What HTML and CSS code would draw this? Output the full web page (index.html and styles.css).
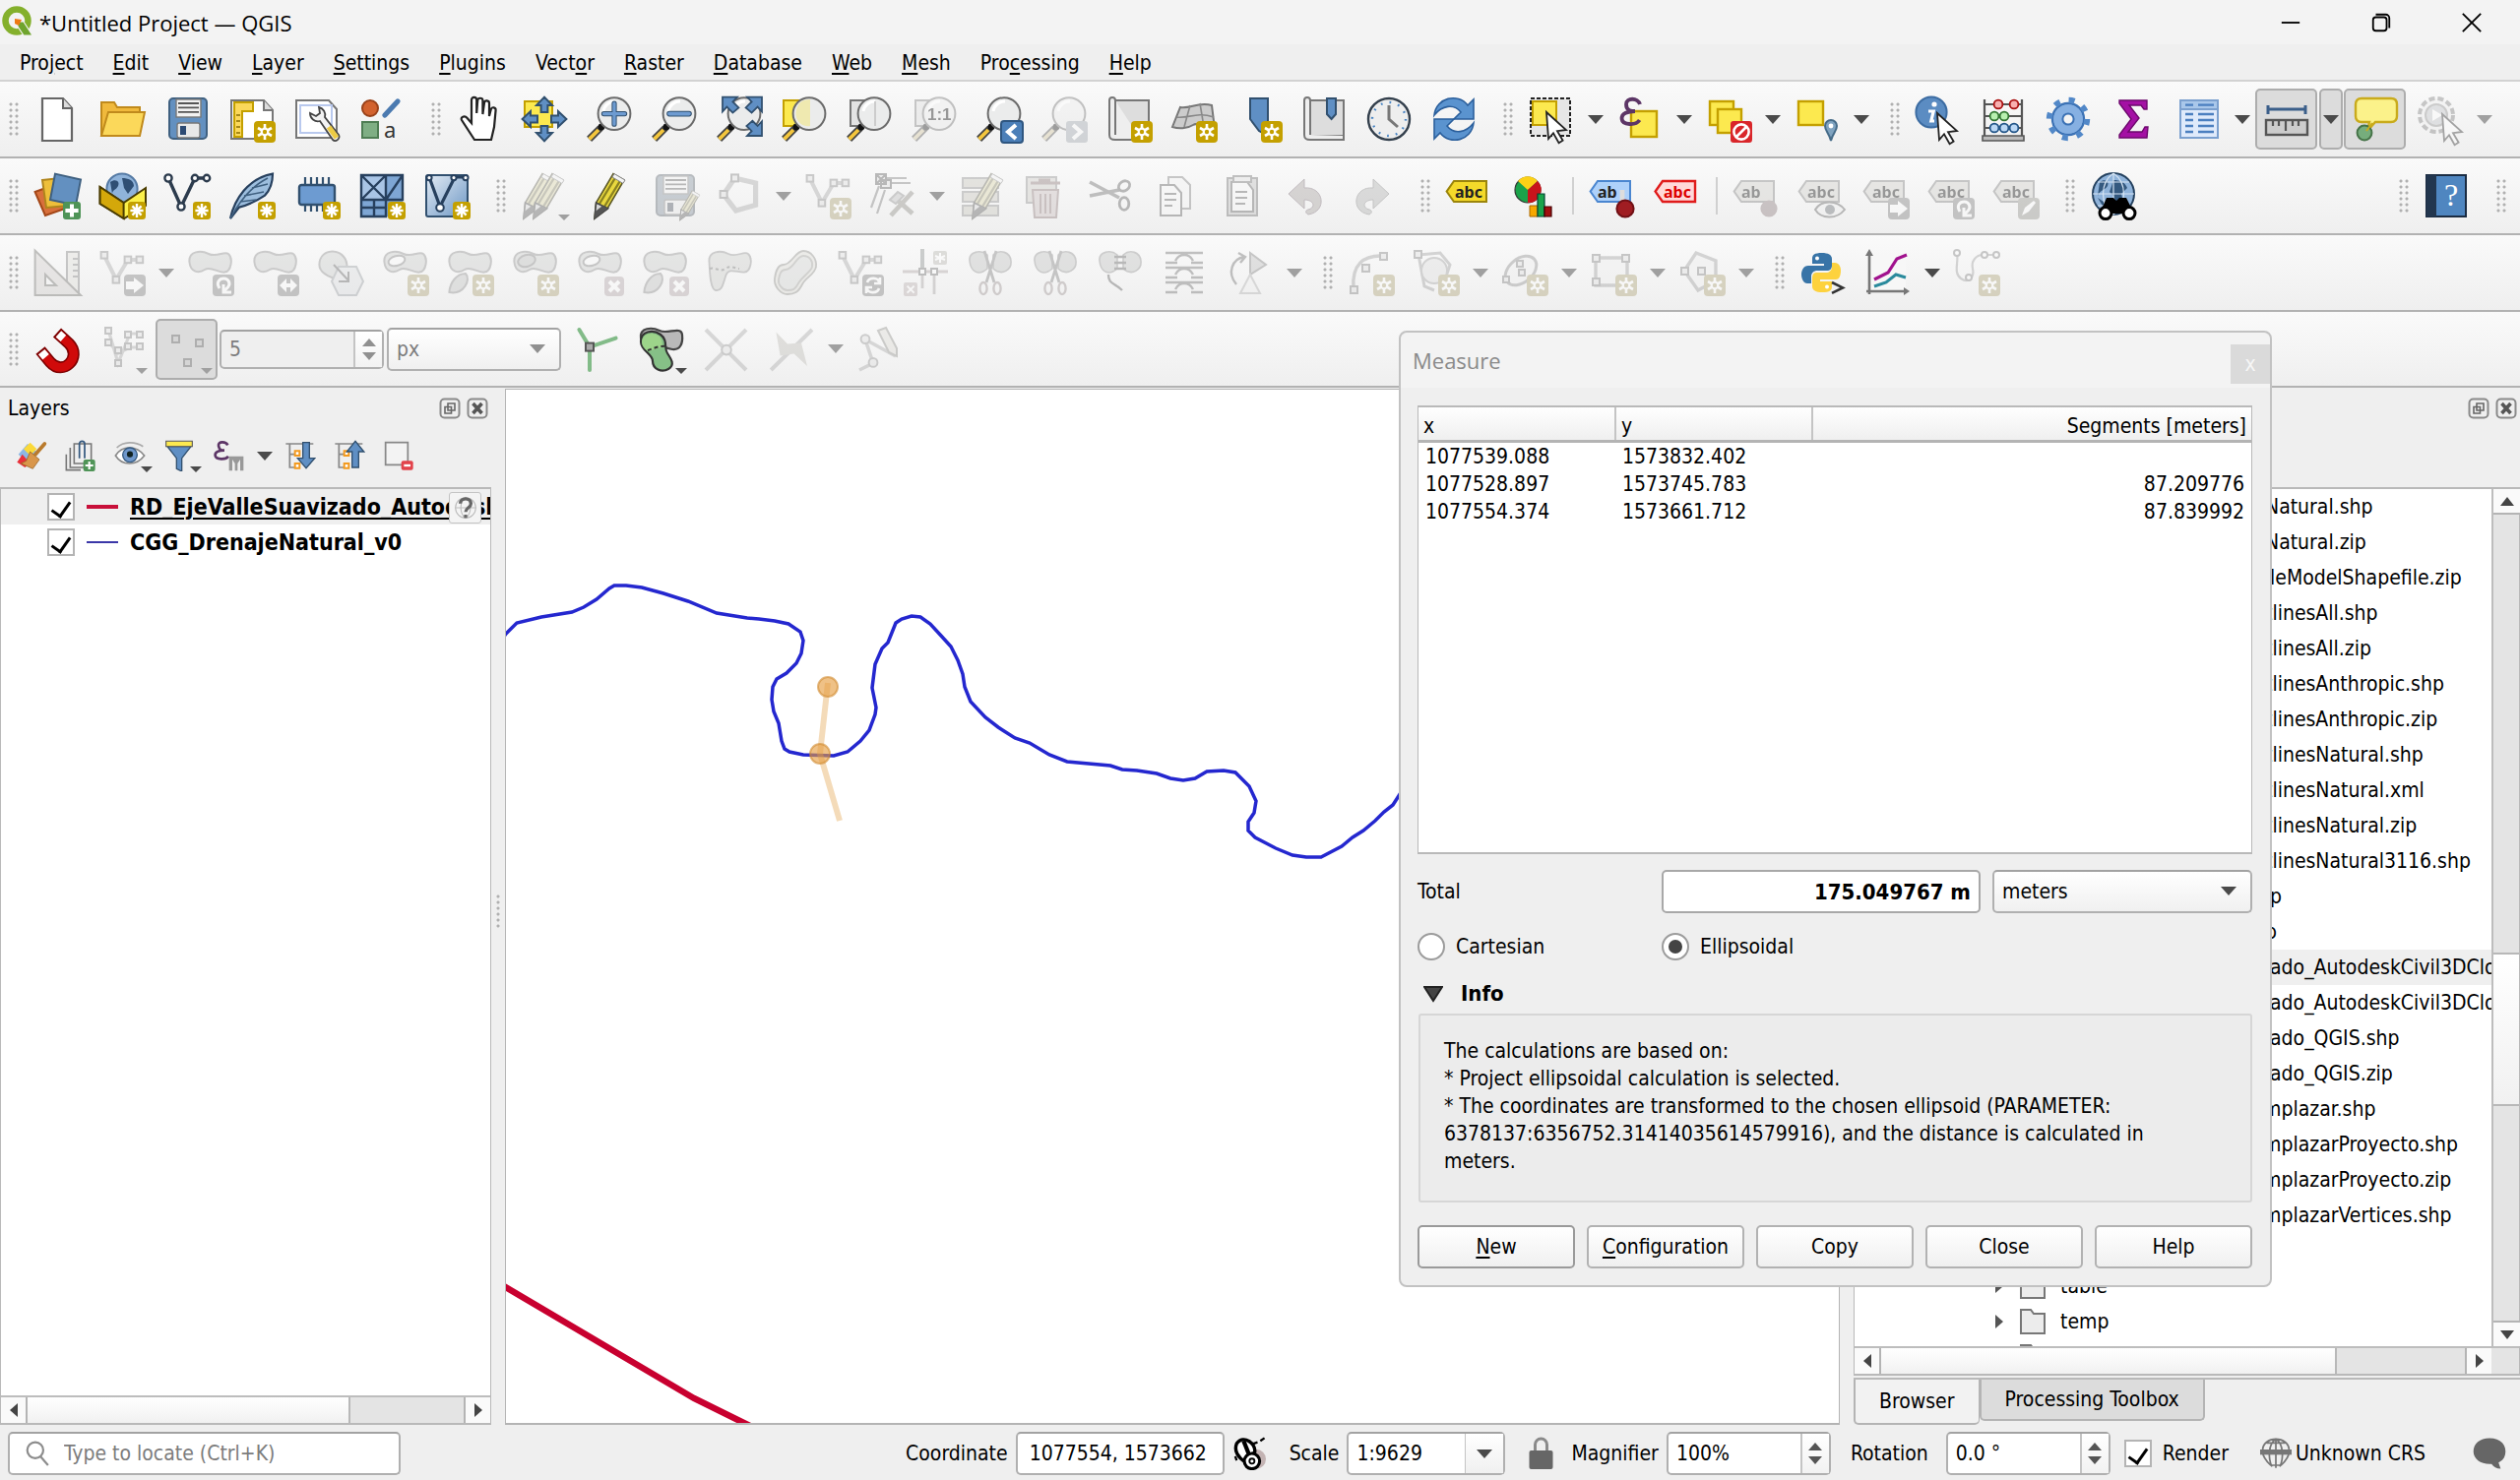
FILE: index.html
```html
<!DOCTYPE html>
<html lang="en">
<head>
<meta charset="utf-8">
<title>*Untitled Project — QGIS</title>
<link rel="stylesheet" href="styles.css">
</head>
<body>

<svg class="defs" aria-hidden="true">
  <defs>
    <linearGradient id="sheen" x1="0" y1="0" x2="1" y2="1"><stop offset="0" stop-color="#e4ecf5"/><stop offset="1" stop-color="#6d97c4"/></linearGradient>
    <g id="b-new"><rect x="13" y="13" width="11" height="11" rx="2" fill="#c4a000"/><path d="M18.500 14.500v8M15 16.500l7 4M22 16.500l-7 4" stroke="#fff" stroke-width="1.300"/><circle cx="18.500" cy="18.500" r="2.200" fill="#fff"/><circle cx="18.500" cy="18.500" r="1.100" fill="#c4a000"/></g>
    <g id="b-add"><rect x="15" y="15" width="9" height="9" rx="1.600" fill="#c4a000"/><path d="M19.500 16v7M16.200 19.500h6.600M17.200 17.200l4.600 4.600M21.800 17.200l-4.600 4.600" stroke="#fff" stroke-width="1.200"/></g>
    <g id="b-move"><rect x="13" y="13" width="11" height="11" rx="2" fill="#777"/><path d="M14 16.500h4v-2l5 4-5 4v-2h-4z" fill="#fff"/></g>
    <g id="b-turn"><rect x="13" y="13" width="11" height="11" rx="2" fill="#777"/><path d="M16.500 20c-2-3 0-5 2.200-5s3.800 2.500 2 4.500l-2 2M18.500 18v4h4" fill="none" stroke="#fff" stroke-width="1.500"/></g>
    <g id="b-size"><rect x="13" y="13" width="11" height="11" rx="2" fill="#777"/><path d="M14 18.500l3.500-3.500v2.500h2v-2.500l3.500 3.500-3.500 3.500v-2.500h-2v2.500z" fill="#fff"/></g>
    <g id="b-del"><rect x="14" y="14" width="10" height="10" rx="2" fill="#c79aa5"/><path d="M16.500 16.500l5 5M21.500 16.500l-5 5" stroke="#fff" stroke-width="2"/></g>
    <g id="b-edit"><rect x="13" y="13" width="11" height="11" rx="2" fill="#8d8d76"/><path d="M15 22l1.500-4 4.500-3.500 1 1-3.500 4.500z" fill="#fff"/></g>
    <g id="lens"><path d="M1.800 22.200L7.500 16.500" stroke="#444" stroke-width="3.600"/><path d="M1.800 22.200L6.500 17.500" stroke="#f4c63d" stroke-width="1.900"/><circle cx="8" cy="16" r="1.700" fill="#111"/><circle cx="14.500" cy="9.300" r="8.200" fill="#ebecec" stroke="#6b6b6b" stroke-width="1"/><path d="M9 8c.500-3 3-5 6-5" stroke="#fff" stroke-width="1.500" fill="none"/></g>
    <g id="blob"><path d="M1.200 6.500C.8 1 7 .5 11 2.500S19 .8 21 2.500c2.500 2.200 1.500 9-2 9.300S12 8.500 9 10.500 1.700 12 1.200 6.500z" fill="#c3c9c4" stroke="#858585"/></g>
    <g id="vline"><path d="M2.500 3L9 17.500 16 3h6" fill="none" stroke="#2c3b4d" stroke-width="1.700"/><g fill="#fff" stroke="#2c3b4d" stroke-width="1.200"><circle cx="2.500" cy="3" r="1.800"/><circle cx="9" cy="17.500" r="1.800"/><circle cx="16" cy="3" r="1.600"/><circle cx="22" cy="3" r="1.600"/></g></g>
    <g id="vgrey"><path d="M3 3.500l6 12L15 5.500h6" fill="none" stroke="#a5a5a5" stroke-width="2"/><g fill="#ddd" stroke="#808080"><rect x="1.300" y="1.500" width="3.300" height="3.300"/><rect x="7.300" y="14" width="3.300" height="3.300"/><rect x="13.300" y="3.800" width="3.300" height="3.300"/><rect x="19.300" y="3.800" width="3.300" height="3.300"/></g></g>
    <g id="pencil"><path d="M7.500 23.500l.8-8L17 .8l5.500 3.200L14 18.500z" fill="#e9d83f" stroke="#5d5a28" stroke-width=".8"/><path d="M10 16L18.500 2M12.500 17.500L21 3.500" stroke="#8b8220" stroke-width="1.200"/><path d="M17.500.8l5.500 3.200-1 1.700-5.500-3.200z" fill="#f4f4f4" stroke="#888" stroke-width=".5"/><path d="M7.500 23.500l.8-8 6 3z" fill="#d8d8d8" stroke="#444" stroke-width=".8"/><path d="M7.500 23.500l.3-3.500 3.800-3 2.500 1.500z" fill="#555"/></g>
    <g id="floppy"><rect x="3" y="1.500" width="19" height="20.500" rx="2" fill="#6390c0" stroke="#3f6080"/><rect x="6.500" y="2" width="12.500" height="9" fill="#f2f2f2" stroke="#777" stroke-width=".7"/><path d="M7.500 4h10.500M7.500 6.200h10.500M7.500 8.400h10.500" stroke="#555" stroke-width=".9"/><rect x="7" y="14" width="11.500" height="7.500" rx="1" fill="#e8e8e8" stroke="#777" stroke-width=".7"/><rect x="8.500" y="15.500" width="3" height="4.500" fill="#2c4a73"/></g>
    <g id="cursor"><path d="M0 0l10 9-4.500.6 2.800 4.800-2 1.200-2.800-5L1 13.500z" fill="#fff" stroke="#222" stroke-width=".9"/></g>
    <g id="cut"><path d="M1.500 6C1 1.500 7 0 10.500 3v7C6 14 2 11.500 1.500 6zM13.500 3C17 0 22 1.500 22.500 6S18 14 13.500 10z" fill="#b9c0ba" stroke="#888" stroke-width=".8"/><path d="M9 1l5 16M15 1l-5 16" stroke="#777" stroke-width="1.400"/><ellipse cx="8.500" cy="20" rx="1.800" ry="3" fill="none" stroke="#a88" stroke-width="1.200"/><ellipse cx="15.500" cy="20" rx="1.800" ry="3" fill="none" stroke="#a88" stroke-width="1.200"/></g>
    <g id="tag"><path d="M4.500 4.500H21V15H4.500L.8 9.800z"/></g>
    <g id="globe"><circle cx="12" cy="11" r="10.500" fill="#8fb3da" stroke="#24415f"/><path d="M5 5c3-2 5 0 4 2S5 9 4 12M12 4c3 0 6 1 7 4l-3 3 1 4-3 2-2-5-2-2zM4 13l3 2v3" fill="#34597f"/><path d="M1.500 11h21M12 .5v21M4 5h16M4 17h16M12 .5c-7 5-7 16 0 21M12 .5c7 5 7 16 0 21" fill="none" stroke="#d5e4f3" stroke-width=".6"/></g>
    <g id="float"><rect x="1.500" y="1.500" width="19" height="19" rx="4" fill="none" stroke="#8a8a8a" stroke-width="2"/><path d="M9 6h7v7h-7zM6 9.500h6.500V16H6z" fill="#efefef" stroke="#666" stroke-width="1.600"/></g>
    <g id="shut"><rect x="1.500" y="1.500" width="19" height="19" rx="4" fill="none" stroke="#8a8a8a" stroke-width="2"/><path d="M6.500 6l9 10M15.500 6l-9 10" stroke="#555" stroke-width="3.600"/></g>
  </defs>
</svg>

<header class="titlebar">
  <svg class="logo" viewBox="0 0 34 46" aria-hidden="true"><ellipse cx="17" cy="21" rx="11.500" ry="11.500" fill="none" stroke="#84b02c" stroke-width="6.500"/><path d="M18 22h6l9 14h-9l-6-9z" fill="#6fa42d" stroke="#f3f3f3" stroke-width="1.200"/><path d="M15 19l7 1-3 6-4-2z" fill="#ee7913"/></svg>
  <h1>*Untitled Project — QGIS</h1>
  <div class="winbtns">
    <button aria-label="Minimize"><svg viewBox="0 0 24 24"><path d="M2 12h20"/></svg></button>
    <button aria-label="Restore"><svg viewBox="0 0 24 24"><rect x="3" y="6" width="15" height="15" rx="3"/><path d="M6 3h11a4 4 0 014 4v11"/></svg></button>
    <button aria-label="Close window"><svg viewBox="0 0 24 24"><path d="M2 2l20 20M22 2L2 22"/></svg></button>
  </div>
</header>

<nav class="menubar">
  <a href="#">Pro<u>j</u>ect</a><a href="#"><u>E</u>dit</a><a href="#"><u>V</u>iew</a><a href="#"><u>L</u>ayer</a><a href="#"><u>S</u>ettings</a><a href="#"><u>P</u>lugins</a><a href="#">Vect<u>o</u>r</a><a href="#"><u>R</u>aster</a><a href="#"><u>D</u>atabase</a><a href="#"><u>W</u>eb</a><a href="#"><u>M</u>esh</a><a href="#">Pro<u>c</u>essing</a><a href="#"><u>H</u>elp</a>
</nav>

<div class="toolbar">
  <i class="grip"></i>
  <button class="tool" aria-label="New project"><svg viewBox="0 0 24 24"><path d="M4.500 1.500H15l4.500 5V23h-15z" fill="#fff" stroke="#666" stroke-width="1.100"/><path d="M15 1.500v5h4.500" fill="#ddd" stroke="#666"/></svg></button>
  <button class="tool" aria-label="Open project"><svg viewBox="0 0 24 24"><path d="M1.500 20.500V3.500H8l1.500 2.500H21v5" fill="#f0b93c" stroke="#c08a1c"/><path d="M1.500 20.500L5 8.500h18.500L21 20.500z" fill="#fbd85a" stroke="#c08a1c"/></svg></button>
  <button class="tool" aria-label="Save project"><svg viewBox="0 0 24 24"><use href="#floppy"/></svg></button>
  <button class="tool" aria-label="New print layout"><svg viewBox="0 0 24 24"><path d="M1.500 2.500H18l4.500 5V22h-21z" fill="#fff" stroke="#777"/><path d="M18 2.500v5h4.500" fill="#ddd" stroke="#777"/><path d="M3 3.500h9.500V8H7v13H3z" fill="#fbd85a" stroke="#c4a000"/><path d="M4 10h2M4 13h2M4 16h2M4 19h2" stroke="#8a6d00" stroke-width=".8"/><use href="#b-new"/></svg></button>
  <button class="tool" aria-label="Layout manager"><svg viewBox="0 0 24 24"><path d="M1.500 2.500H18l4 4.500v14.500H1.500z" fill="#fff" stroke="#777"/><rect x="3.500" y="5" width="16" height="14" fill="none" stroke="#b9c9ee"/><path d="M8.500 9a4 4 0 005 4L20 22.500c1.500 1.500 4-.5 3-2.500L16 11a4 4 0 00-3-5l.5 3-2 1.500z" fill="#f3f3f3" stroke="#444" stroke-width=".9"/><path d="M18 16l4 5.500" stroke="#eccb45" stroke-width="2.600"/></svg></button>
  <button class="tool" aria-label="Style manager"><svg viewBox="0 0 24 24"><circle cx="6" cy="6.500" r="4" fill="#d2622e" stroke="#99421a"/><path d="M13.500 10L20 3" stroke="#4b7ab0" stroke-width="2.600" stroke-linecap="round"/><rect x="2" y="13.500" width="8" height="8" fill="#7fae84" stroke="#4f7d54"/><text x="13" y="21.500" font-family="Noto Sans,sans-serif" font-size="11" fill="#333">a</text></svg></button>
  <i class="grip next"></i>
  <button class="tool" aria-label="Pan map"><svg viewBox="0 0 24 24"><path d="M8.500 22.500L2 12.500c-.8-1.500 1.500-2.500 2.800-1L7 14V2.300c0-1.800 2.600-1.800 2.600 0V9l.5-6.500c.2-1.500 2.500-1.500 2.600 0V9.500l.8-5.800c.3-1.500 2.500-1.200 2.500.3v6.500l.9-3.500c.4-1.400 2.500-1 2.400.4L18.500 16 17 22.500z" transform="translate(1 0)" fill="#fff" stroke="#222" stroke-width="1.100"/></svg></button>
  <button class="tool" aria-label="Pan to selection"><svg viewBox="0 0 24 24"><rect x="2" y="3" width="14" height="13" fill="#fce94f" stroke="#c4a000"/><path d="M12 .8l4 4.200h-2.300v3.500h-3.400V5H8zM12 23.200l4-4.200h-2.300v-3.500h-3.400V19H8zM.8 12L5 8v2.300h3.500v3.400H5V16zM23.200 12L19 8v2.300h-3.500v3.400H19V16z" fill="#5f8fc4" stroke="#31506f"/></svg></button>
  <button class="tool" aria-label="Zoom in"><svg viewBox="0 0 24 24"><use href="#lens"/><path d="M14.500 4v10.600M9.200 9.300h10.600" stroke="#31506f" stroke-width="2.600" stroke-linecap="round"/><path d="M14.500 4v10.600M9.200 9.300h10.600" stroke="#6d9bd1" stroke-width="1.600" stroke-linecap="round"/></svg></button>
  <button class="tool" aria-label="Zoom out"><svg viewBox="0 0 24 24"><use href="#lens"/><path d="M9.500 9.300h10" stroke="#31506f" stroke-width="2.800" stroke-linecap="round"/><path d="M9.500 9.300h10" stroke="#6d9bd1" stroke-width="1.800" stroke-linecap="round"/></svg></button>
  <button class="tool" aria-label="Zoom full"><svg viewBox="0 0 24 24"><use href="#lens"/><path d="M3.500.8H11L8.700 3.200l3 3-3 2.600-3-3-2.200 2.400zM23.500.8H16l2.300 2.400-3 3 3 2.600 3-3 2.200 2.400zM23.500 20.500H16l2.300-2.400-2.600-2.600 3-2.600 2.600 2.600 2.200-2.400z" fill="#5f8fc4" stroke="#31506f" stroke-width=".9"/></svg></button>
  <button class="tool" aria-label="Zoom to selection"><svg viewBox="0 0 24 24"><rect x="1.500" y="2.500" width="13" height="13" fill="#fce94f" stroke="#c4a000"/><use href="#lens"/><path d="M10 3.500c1-1 3-1.500 5-1.500v13.500c-6 1-10-6-5-12z" fill="#efe9b0"/></svg></button>
  <button class="tool" aria-label="Zoom to layer"><svg viewBox="0 0 24 24"><rect x="2.500" y="2.500" width="13" height="13" fill="#e4e4e4" stroke="#777"/><use href="#lens"/><path d="M15 3v12.500" stroke="#ccc"/></svg></button>
  <button class="tool" disabled aria-label="Zoom to native resolution"><svg viewBox="0 0 24 24"><rect x="2.500" y="2.500" width="13" height="13" fill="#ddd" stroke="#777"/><use href="#lens"/><text x="8.500" y="12.300" font-family="Liberation Sans,sans-serif" font-size="8.500" font-weight="700">1:1</text></svg></button>
  <button class="tool" aria-label="Zoom last"><svg viewBox="0 0 24 24"><use href="#lens"/><rect x="13" y="13" width="11" height="11" rx="1.500" fill="#4b7fb8" stroke="#2f5680"/><path d="M20.500 15l-4 3.500 4 3.500" fill="none" stroke="#fff" stroke-width="2"/></svg></button>
  <button class="tool" disabled aria-label="Zoom next"><svg viewBox="0 0 24 24"><use href="#lens"/><rect x="13" y="13" width="11" height="11" rx="1.500" fill="#8ca5bd"/><path d="M16.500 15l4 3.500-4 3.500" fill="none" stroke="#fff" stroke-width="2"/></svg></button>
  <button class="tool" aria-label="New map view"><svg viewBox="0 0 24 24"><path d="M5 2.500h17v17H5z" fill="#ddd" stroke="#777"/><path d="M5 2.500c0-2-3-2-3 0V20c0 2 1 2.500 3 2.500h13" fill="#eee" stroke="#777"/><path d="M5 2.500V20" stroke="#777"/><use href="#b-new"/></svg></button>
  <button class="tool" aria-label="New 3D map view"><svg viewBox="0 0 24 24"><path d="M1 16L5 6c5 1 9-3 16-1l1.500 12c-6 1-8-4-11-2S4 17 1 16z" fill="#ccc" stroke="#777"/><path d="M3 11c6 1 10-3 19 0M10 5l-3 11M15 4l2 12" fill="none" stroke="#888" stroke-width=".8"/><use href="#b-new"/></svg></button>
  <button class="tool" aria-label="New spatial bookmark"><svg viewBox="0 0 24 24"><path d="M7.500 1.500h9v19L12 18l-4.500-6z" fill="#5f8fc4" stroke="#31506f"/><use href="#b-new"/></svg></button>
  <button class="tool" aria-label="Show spatial bookmarks"><svg viewBox="0 0 24 24"><path d="M5 2.500h17v18H5z" fill="#ddd" stroke="#777"/><path d="M5 20V2.500c0-2-3-2-3 0V20c0 2 1 2.500 3 2.500h17v-2" fill="#eee" stroke="#777"/><path d="M13.500 1.500h4.500v8l-2.200 2.500-2.300-2.500z" fill="#5f8fc4" stroke="#31506f"/></svg></button>
  <button class="tool" aria-label="Temporal controller"><svg viewBox="0 0 24 24"><circle cx="12" cy="12" r="10.500" fill="#eee" stroke="#333f4c" stroke-width="1.200"/><circle cx="12" cy="12" r="8.500" fill="none" stroke="#4b86c4" stroke-width="1.200" stroke-dasharray=".9 3.550"/><path d="M12 5v7l4.500 4" fill="none" stroke="#777" stroke-width="1.500"/></svg></button>
  <button class="tool" aria-label="Refresh"><svg viewBox="0 0 24 24"><path d="M2 10C3 1 14-1.500 19 5l3-3v10H12l3.500-3.500C12 4 6 5 2 10z" fill="#5a93cf" stroke="#2b5f9c" stroke-width=".8"/><path d="M22 14c-1 9-12 11.500-17 5l-3 3V12h10l-3.500 3.500C12 20 18 19 22 14z" fill="#5a93cf" stroke="#2b5f9c" stroke-width=".8"/></svg></button>
  <i class="grip next"></i>
  <button class="tool" aria-label="Select features"><svg viewBox="0 0 24 24"><rect x="1.500" y="1.500" width="20" height="19" fill="#e6e6e6" stroke="#222" stroke-dasharray="2 1"/><rect x="2.500" y="3" width="12" height="12" fill="#fce94f" stroke="#c4a000"/><use href="#cursor" x="9.500" y="8.500"/></svg></button><button class="drop" aria-label="Select options"></button>
  <button class="tool" aria-label="Select by expression"><svg viewBox="0 0 24 24"><rect x="7.500" y="8" width="13" height="13" fill="#fce94f" stroke="#c4a000" stroke-width="1.200"/><path d="M12 4.500C11 1 5 1 5 4.500S8 8 9.500 8C6 8 2.500 9 2.800 12s7 3.500 9 .5" fill="none" stroke="#5c3566" stroke-width="1.900"/></svg></button><button class="drop" aria-label="Select by options"></button>
  <button class="tool" aria-label="Deselect"><svg viewBox="0 0 24 24"><rect x="2.500" y="3" width="12" height="12" fill="#fce94f" stroke="#c4a000" stroke-width="1.200"/><rect x="6.500" y="7" width="12" height="12" fill="#fce94f" stroke="#c4a000" stroke-width="1.200"/><rect x="13" y="13" width="11" height="11" rx="1.500" fill="#d9262a"/><circle cx="18.500" cy="18.500" r="3.800" fill="none" stroke="#fff" stroke-width="1.300"/><path d="M16 21l5-5" stroke="#fff" stroke-width="1.300"/></svg></button><button class="drop" aria-label="Deselect options"></button>
  <button class="tool" aria-label="Select by location"><svg viewBox="0 0 24 24"><rect x="2.500" y="3" width="12.500" height="12" fill="#fce94f" stroke="#c4a000" stroke-width="1.200"/><path d="M19 23c-1-4-3-5-3-7.500a3 3 0 016 0c0 2.500-2 3.500-3 7.500z" fill="#7fa3c0" stroke="#456b88"/><circle cx="19" cy="15.500" r="1.200" fill="#fff"/></svg></button><button class="drop" aria-label="Location options"></button>
  <i class="grip next"></i>
  <button class="tool" aria-label="Identify features"><svg viewBox="0 0 24 24"><circle cx="8.500" cy="8.500" r="7.800" fill="#5b8cc2" stroke="#3c6ca2"/><circle cx="10" cy="4.500" r="1.300" fill="#fff"/><path d="M7 8h2.600l-1.200 5H10" fill="none" stroke="#fff" stroke-width="1.600"/><use href="#cursor" x="11.500" y="9"/></svg></button>
  <button class="tool" aria-label="Field calculator"><svg viewBox="0 0 24 24"><path d="M2.500 2v19M21.500 2v19M2 4.500h20M2 10.500h20M2 16.500h20" stroke="#555" stroke-width="1.100"/><g stroke-width=".9"><g fill="#f8b0b0" stroke="#a11"><circle cx="9.500" cy="4.500" r="2.200"/><circle cx="17.500" cy="4.500" r="2.200"/></g><g fill="#b8f0b0" stroke="#373"><circle cx="7.500" cy="10.500" r="2.200"/><circle cx="12.500" cy="10.500" r="2.200"/></g><g fill="#bcd8f5" stroke="#258"><circle cx="7.500" cy="16.500" r="2.200"/><circle cx="12.500" cy="16.500" r="2.200"/><circle cx="17.500" cy="16.500" r="2.200"/></g></g><path d="M1.500 20.500h21V23h-21z" fill="#bbb" stroke="#555" stroke-width=".8"/></svg></button>
  <button class="tool" aria-label="Toolbox"><svg viewBox="0 0 24 24"><circle cx="12" cy="12" r="8" fill="#7fabe0" stroke="#3c72b5" stroke-width="1.200"/><circle cx="12" cy="12" r="9.600" fill="none" stroke="#5288c8" stroke-width="3" stroke-dasharray="3 4.540"/><circle cx="12" cy="12" r="7.400" fill="#86b0e2"/><circle cx="12" cy="12" r="2.800" fill="#f4f4f4" stroke="#3c72b5"/></svg></button>
  <button class="tool" aria-label="Statistical summary"><svg viewBox="0 0 24 24"><path d="M5 2.500h14V7h-1.500L16 5H10l5 6.500L9.500 18.500H16.500L18 16h1.500L19 21.500H5V20l6-8-6-8z" fill="#a411a4" stroke="#6c086c" stroke-width=".7"/></svg></button>
  <button class="tool" aria-label="Attribute table"><svg viewBox="0 0 24 24"><rect x="3" y="2.500" width="19" height="19" fill="#dfeafb" stroke="#7ba0cf"/><rect x="3" y="2.500" width="19" height="4.500" fill="#a9c7ea" stroke="#7ba0cf"/><path d="M5.500 4.800h4M12 4.800h8M5.500 9.500h4M12 9.500h8M5.500 12.500h4M12 12.500h8M5.500 15.500h4M12 15.500h8M5.500 18.500h4M12 18.500h8" stroke="#4b7fc0" stroke-width="1.200"/></svg></button><button class="drop" aria-label="Table options"></button>
  <button class="tool pressed" aria-label="Measure line"><svg viewBox="0 0 24 24"><path d="M2.500 7h19M2.500 5v4.500M21.500 5v4.500" stroke="#3b5f8a" stroke-width="1.500"/><rect x="1.500" y="12.500" width="21" height="7.500" fill="#ccc" stroke="#555" stroke-width="1.200"/><path d="M5 12.500v3M8 12.500v3M11.500 12.500v5.500M15 12.500v3M18 12.500v3" stroke="#555" stroke-width="1.100"/></svg></button><button class="drop pressed" aria-label="Measure options"></button>
  <button class="tool pressed" aria-label="Map tips"><svg viewBox="0 0 24 24"><path d="M5 1.500h15q3 0 3 3v6q0 3-3 3h-8l-4 4.500 1-4.500H5q-3 0-3-3v-6q0-3 3-3z" fill="#fbf28a" stroke="#c9ab1c" stroke-width="1.200"/><circle cx="6.500" cy="19" r="3.700" fill="#76ad7c" stroke="#467348"/><path d="M7.500 18l3-4" stroke="#c9ab1c"/></svg></button>
  <button class="tool" disabled aria-label="Run feature action"><svg viewBox="0 0 24 24"><circle cx="10" cy="10" r="8.500" fill="#eee" stroke="#777" stroke-width="2" stroke-dasharray="3 1.500"/><circle cx="10" cy="10" r="5.500" fill="#b6c0cc" stroke="#888"/><path d="M8 7l5 3-5 3z" fill="#fff"/><use href="#cursor" x="13" y="9.500"/></svg></button><button class="drop" disabled aria-label="Action options"></button>
</div>

<div class="toolbar">
  <i class="grip"></i>
  <button class="tool" aria-label="Data source manager"><svg viewBox="0 0 24 24"><path d="M.8 10L9 7l7 11.500L6 22z" fill="#d8703c" stroke="#a34718"/><path d="M4.500 4l9-1 4 14-11 1z" fill="#eebf3a" stroke="#b0851c"/><path d="M11 .8l13 3-2.500 13L8.500 14z" fill="#6390c0" stroke="#3f6080"/><rect x="15" y="15" width="9" height="9" rx="1.500" fill="#4f9457"/><path d="M19.500 16.200v6.600M16.200 19.500h6.600" stroke="#fff" stroke-width="2"/></svg></button>
  <button class="tool" aria-label="New GeoPackage"><svg viewBox="0 0 24 24"><circle cx="12" cy="8.500" r="7.800" fill="#8fb3da" stroke="#567ba5"/><path d="M6 5c3-2 5 0 4 2s-3 2-3 4M12 3c3 0 6 1 6 4l-3 4-2-3z" fill="#2f4f74"/><path d="M.8 7.500l12 8L24 8v9L13 23.500.8 16z" fill="#fbf04a" stroke="#4a3c00"/><path d="M.8 7.500l12 8v8L.8 16z" fill="#d4a80a" stroke="#4a3c00"/><use href="#b-add"/></svg></button>
  <button class="tool" aria-label="New shapefile"><svg viewBox="0 0 24 24"><use href="#vline"/><use href="#b-add"/></svg></button>
  <button class="tool" aria-label="New SpatiaLite layer"><svg viewBox="0 0 24 24"><path d="M1 23.500C3 14 10 3 22.500.8c0 5-1 8-4 11-3 2-9 5-13 6z" fill="#9dbede" stroke="#27405e" stroke-width="1.100"/><path d="M1 23.500C6 14 12 7 20 3M8 12l10-2M6 15l8-1M12 8l8-2" fill="none" stroke="#3f6080" stroke-width=".8"/><use href="#b-add"/></svg></button>
  <button class="tool" aria-label="New temporary layer"><svg viewBox="0 0 24 24"><path d="M6 2.500v17.500M9 2.500v17.500M12 2.500v17.500M15 2.500v17.500M18 2.500v17.500" stroke="#31506f" stroke-width="1.100"/><rect x="3" y="6.500" width="18" height="10" rx="1.200" fill="#6d9bd1" stroke="#31506f" stroke-width="1.200"/><use href="#b-add"/></svg></button>
  <button class="tool" aria-label="New mesh layer"><svg viewBox="0 0 24 24"><path d="M1.500 1.500h21v21h-21z" fill="#7ea6d4"/><path d="M1.500 1.500h12.500v12.500H1.500z" fill="#a9c5e6"/><path d="M1.500 1.500h12.500v12.500H1.500zM14 1.500h8.500V14H14M1.500 14v8.500H14V14M8 14v8.500M1.500 18H14M1.500 1.500l12.500 12.500M14 1.500L1.500 14M22.500 1.500L14 14" fill="none" stroke="#27405e" stroke-width="1.200"/><use href="#b-add"/></svg></button>
  <button class="tool" aria-label="New virtual layer"><svg viewBox="0 0 24 24"><rect x="1.500" y="1.500" width="21" height="21" rx="1" fill="url(#sheen)" stroke="#31506f"/><path d="M3 2.500L8.500 17.500 16 2.500h6" fill="none" stroke="#27405e" stroke-width="1.600"/><g fill="#fff" stroke="#27405e"><circle cx="8.500" cy="18" r="1.900"/><circle cx="3" cy="2.800" r="1.300"/><circle cx="15.500" cy="2.800" r="1.300"/><circle cx="21.500" cy="2.800" r="1.300"/></g><use href="#b-add"/></svg></button>
  <i class="grip next"></i>
  <button class="tool mini" disabled aria-label="Current edits"><svg viewBox="0 0 24 24"><g transform="translate(-6)"><use href="#pencil"/></g><g transform="translate(-1)"><use href="#pencil"/></g></svg></button>
  <button class="tool" aria-label="Toggle editing"><svg viewBox="0 0 24 24"><g transform="translate(-3)"><use href="#pencil"/></g></svg></button>
  <button class="tool" disabled aria-label="Save layer edits"><svg viewBox="0 0 24 24"><use href="#floppy"/><g transform="translate(10 9) scale(.65)"><use href="#pencil"/></g></svg></button>
  <button class="tool" disabled aria-label="Add polygon"><svg viewBox="0 0 24 24"><path d="M9.700 3l10.600 2.500v11.200L10.300 19.500 4 11.300z" fill="none" stroke="#a5a5a5" stroke-width="2.600"/><g fill="#ddd" stroke="#777"><rect x="8" y="1.200" width="3.500" height="3.500"/><rect x="2.300" y="9.500" width="3.500" height="3.500"/></g></svg></button><button class="drop" disabled aria-label="Digitize options"></button>
  <button class="tool" disabled aria-label="Add feature"><svg viewBox="0 0 24 24"><use href="#vgrey"/><use href="#b-new"/></svg></button>
  <button class="tool" disabled aria-label="Vertex tool"><svg viewBox="0 0 24 24"><path d="M1 18L5 7M4 21L8 9M8 3h11M8 5.500h13" stroke="#777" stroke-width="1.100"/><path d="M3.500 1h5v5h-5zM6 4h5v4H6zM3.500 1l5 5M8.500 1l-5 5" fill="#ddd" stroke="#555"/><path d="M11 22l11-12M22 21L13 13" stroke="#8c8870" stroke-width="2.400"/><path d="M10.500 14l4-4 3 2-4 4z" fill="#bbb" stroke="#888"/></svg></button><button class="drop" disabled aria-label="Vertex options"></button>
  <button class="tool" disabled aria-label="Modify attributes"><svg viewBox="0 0 24 24"><path d="M2.500 3h18v5h-18zM2.500 10h18v5h-18zM2.500 17h18v5h-18z" fill="#c9c4a2" stroke="#888"/><use href="#pencil"/></svg></button>
  <button class="tool" disabled aria-label="Delete selected"><svg viewBox="0 0 24 24"><path d="M2 2.500h15v13H2z" fill="#cfc9b4" stroke="#888"/><path d="M4 5.500h15M8 4h6" stroke="#a66" stroke-width="1.500"/><path d="M5 9h13l-1 14H6z" fill="#d9b6b6" stroke="#a66"/><path d="M9 11v10M11.500 11v10M14 11v10" stroke="#a66"/></svg></button>
  <button class="tool" disabled aria-label="Cut features"><svg viewBox="0 0 24 24"><path d="M1 5l15 8M1 12l15-3" stroke="#666" stroke-width="1.800"/><ellipse cx="18.500" cy="7" rx="3" ry="2.400" transform="rotate(-35 18.500 7)" fill="none" stroke="#555" stroke-width="1.400"/><ellipse cx="18.500" cy="16" rx="2.400" ry="3.200" fill="none" stroke="#555" stroke-width="1.400"/></svg></button>
  <button class="tool" disabled aria-label="Copy features"><svg viewBox="0 0 24 24"><path d="M8 2.500h7l4 4v12H8z" fill="#f4f4f4" stroke="#777"/><path d="M4 6.500h7l3.500 4V22H4z" fill="#f8f8f8" stroke="#555"/><path d="M6 11h6M6 14h6M6 17h4" stroke="#555"/></svg></button>
  <button class="tool" disabled aria-label="Paste features"><svg viewBox="0 0 24 24"><path d="M5 3h15v19H5z" fill="#bbb" stroke="#666"/><path d="M7 5h8l3 4v11H7z" fill="#f8f8f8" stroke="#555"/><path d="M8 2h9v3H8z" fill="#ddd" stroke="#666"/><path d="M9 10h6M9 13h6M9 16h5" stroke="#555"/></svg></button>
  <button class="tool" disabled aria-label="Undo"><svg viewBox="0 0 24 24"><path d="M3 11l8-7.500V8c10-1 12 12 2 13.500-2-1-1-2.500 0-2.500 4-1 3-5-2-5v4.500z" fill="#b09a92" stroke="#857" stroke-width=".5"/></svg></button>
  <button class="tool" disabled aria-label="Redo"><svg viewBox="0 0 24 24"><path d="M21 11l-8-7.500V8C3 7 1 20 11 21.500c2-1 1-2.500 0-2.500-4-1-3-5 2-5v4.500z" fill="#a9aea9" stroke="#777" stroke-width=".5"/></svg></button>
  <i class="grip next"></i>
  <button class="tool" aria-label="Layer labeling"><svg viewBox="0 0 24 24"><use href="#tag" fill="#f4d92a" stroke="#9b850b"/><text x="5" y="12.800" font-family="Noto Sans,sans-serif" font-weight="700" font-size="8" fill="#222">abc</text></svg></button>
  <button class="tool" aria-label="Layer diagrams"><svg viewBox="0 0 24 24"><circle cx="9" cy="9" r="6.500" fill="#1aa34a" stroke="#333" stroke-width=".6"/><path d="M9 9L4 4.500a6.500 6.500 0 0110 0z" fill="#fcd116"/><path d="M9 9l5-4.500A6.500 6.500 0 019 15.500z" fill="#c8141b"/><path d="M10 17h4v5.500h-4z" fill="#f6a800" stroke="#a60" stroke-width=".5"/><path d="M14 11h3.500v11.500H14z" fill="#1aa34a" stroke="#043" stroke-width=".6"/><path d="M17.500 17.500h3.500v5h-3.500z" fill="#a01010" stroke="#400" stroke-width=".6"/></svg></button>
  <i class="sep"></i>
  <button class="tool" aria-label="Pinned labels"><svg viewBox="0 0 24 24"><use href="#tag" fill="#aed1fa" stroke="#4a86d0"/><text x="4.500" y="12.800" font-family="Noto Sans,sans-serif" font-weight="700" font-size="8" fill="#222">ab</text><path d="M17 9v7" stroke="#ddd" stroke-width="2.400"/><circle cx="18.500" cy="18.500" r="4.300" fill="#a01d22" stroke="#701015"/></svg></button>
  <button class="tool" aria-label="Unplaced labels"><svg viewBox="0 0 24 24"><use href="#tag" fill="#ffd9d9" stroke="#e01b1b" stroke-width="1.200"/><text x="5" y="12.800" font-family="Noto Sans,sans-serif" font-weight="700" font-size="8" fill="#d00">abc</text></svg></button>
  <i class="sep"></i>
  <button class="tool" disabled aria-label="Pin labels"><svg viewBox="0 0 24 24"><use href="#tag" fill="#cfcdb8" stroke="#777"/><text x="4.500" y="12.800" font-family="Noto Sans,sans-serif" font-weight="700" font-size="8">ab</text><circle cx="18.500" cy="18.500" r="4.300" fill="#a66a72"/></svg></button>
  <button class="tool" disabled aria-label="Show labels"><svg viewBox="0 0 24 24"><use href="#tag" fill="#cfcdb8" stroke="#777"/><text x="5" y="12.800" font-family="Noto Sans,sans-serif" font-weight="700" font-size="8">abc</text><path d="M9 19c3-5 11-5 15 0-4 5-12 5-15 0z" fill="#eee" stroke="#555"/><circle cx="16.500" cy="19" r="2.500" fill="#567"/></svg></button>
  <button class="tool" disabled aria-label="Move label"><svg viewBox="0 0 24 24"><use href="#tag" fill="#cfcdb8" stroke="#777"/><text x="5" y="12.800" font-family="Noto Sans,sans-serif" font-weight="700" font-size="8">abc</text><use href="#b-move"/></svg></button>
  <button class="tool" disabled aria-label="Rotate label"><svg viewBox="0 0 24 24"><use href="#tag" fill="#cfcdb8" stroke="#777"/><text x="5" y="12.800" font-family="Noto Sans,sans-serif" font-weight="700" font-size="8">abc</text><use href="#b-turn"/></svg></button>
  <button class="tool" disabled aria-label="Change label"><svg viewBox="0 0 24 24"><use href="#tag" fill="#cfcdb8" stroke="#777"/><text x="5" y="12.800" font-family="Noto Sans,sans-serif" font-weight="700" font-size="8">abc</text><use href="#b-edit"/></svg></button>
  <i class="grip next"></i>
  <button class="tool" aria-label="MetaSearch"><svg viewBox="0 0 24 24"><use href="#globe"/><path d="M8.500 13h3.500l1.500 1.500 1.500-1.500h3.500l4 8H5z" fill="#000"/><circle cx="8" cy="20.800" r="3" fill="#fff" stroke="#000" stroke-width="1.500"/><circle cx="20" cy="20.800" r="3" fill="#fff" stroke="#000" stroke-width="1.500"/></svg></button>
  <i class="fill"></i>
  <i class="grip next"></i>
  <button class="tool" aria-label="Help contents"><svg viewBox="0 0 24 24"><rect x="1.500" y="1.500" width="20" height="21" fill="#4f86c0" stroke="#1b2c42"/><rect x="1.500" y="1.500" width="5" height="21" fill="#22364e"/><text x="10.500" y="17" font-family="Liberation Serif,serif" font-size="16" fill="#fff">?</text></svg></button>
  <i class="grip next end"></i>
</div>

<div class="toolbar">
  <i class="grip"></i>
  <button class="tool" disabled aria-label="Advanced digitizing"><svg viewBox="0 0 24 24"><path d="M17 1.500h6v21h-6z" fill="#e0dcc8" stroke="#777"/><path d="M20 5h3M20 8h3M20 11h3M20 14h3" stroke="#777"/><path d="M.8 .8v22.700H24z M6 13v5.500h5.500z" fill="#d8c9c2" stroke="#665" fill-rule="evenodd"/></svg></button>
  <button class="tool" disabled aria-label="Move feature"><svg viewBox="0 0 24 24"><use href="#vgrey"/><use href="#b-move"/></svg></button><button class="drop" disabled aria-label="Move options"></button>
  <button class="tool" disabled aria-label="Rotate feature"><svg viewBox="0 0 24 24"><use href="#blob"/><use href="#b-turn"/></svg></button>
  <button class="tool" disabled aria-label="Scale feature"><svg viewBox="0 0 24 24"><use href="#blob"/><use href="#b-size"/></svg></button>
  <button class="tool" disabled aria-label="Simplify feature"><svg viewBox="0 0 24 24"><path d="M1.200 8c0-9 13-9 14 0 .5 4-1 6-3 8-4-1-11-3-11-8z" fill="#c3cdc6" stroke="#858585"/><path d="M11 9h9l3.500 7.500-3.500 7h-9L7.500 16.500z" fill="#d5dde6" stroke="#89a"/><path d="M8.500 8l7.500 8M16 11.500v5h-5" fill="none" stroke="#555"/></svg></button>
  <button class="tool" disabled aria-label="Add ring"><svg viewBox="0 0 24 24"><use href="#blob"/><ellipse cx="7.500" cy="6" rx="4.300" ry="2.500" transform="rotate(-15 7.500 6)" fill="#f9f9f9" stroke="#777"/><use href="#b-new"/></svg></button>
  <button class="tool" disabled aria-label="Add part"><svg viewBox="0 0 24 24"><use href="#blob"/><path d="M1.200 22C1.500 17 5 12.500 9.500 12.500c3 3-1 11-8.300 9.500z" fill="#bbc0bd" stroke="#858585"/><use href="#b-new"/></svg></button>
  <button class="tool" disabled aria-label="Fill ring"><svg viewBox="0 0 24 24"><use href="#blob"/><ellipse cx="7.500" cy="6" rx="4.500" ry="3" transform="rotate(-15 7.500 6)" fill="#b5b9b6" stroke="#777"/><use href="#b-new"/></svg></button>
  <button class="tool" disabled aria-label="Delete ring"><svg viewBox="0 0 24 24"><use href="#blob"/><ellipse cx="7.500" cy="6" rx="4.300" ry="2.500" transform="rotate(-15 7.500 6)" fill="#f9f9f9" stroke="#777"/><use href="#b-del"/></svg></button>
  <button class="tool" disabled aria-label="Delete part"><svg viewBox="0 0 24 24"><use href="#blob"/><path d="M1.200 22C1.500 17 5 12.500 9.500 12.500c3 3-1 11-8.300 9.500z" fill="#bbc0bd" stroke="#858585"/><use href="#b-del"/></svg></button>
  <button class="tool" disabled aria-label="Reshape features"><svg viewBox="0 0 24 24"><path d="M1.200 6.500C.8 1 7 .5 11 2.500S19 .8 21 2.500c2.500 2.200 1.500 9-2 9.300S11 9 9.500 14s-2 7.500-5 7-3-11-3.300-15z" fill="#c8ccc0" stroke="#888" stroke-width=".9"/><path d="M1.500 10c3-1 5 2 8 0s5 0 7 0" stroke="#666" fill="none" stroke-dasharray="1.500 1.500"/></svg></button>
  <button class="tool" disabled aria-label="Offset curve"><svg viewBox="0 0 24 24"><path d="M6 8c4 0 6-7 10-7s7 4 6.500 8-5 5-7 9-4 5-7.500 5-7-4-6.500-8S3 8 6 8z" fill="#ddd9c4" stroke="#887" stroke-width=".9"/><path d="M7 10.500c4 0 5.500-7 9-7s5 3 4.500 5.500-5 5-7 8.500-3 3.500-5.500 3.500-5-3-4.500-5.500 1-5 3.500-5z" fill="#cdd4cf" stroke="#998" stroke-width=".9"/></svg></button>
  <button class="tool" disabled aria-label="Split features"><svg viewBox="0 0 24 24"><use href="#vgrey"/><rect x="13" y="13" width="11" height="11" rx="2" fill="#777"/><path d="M15.500 17c1-3 6-2.500 6 0M21.500 20c-1 3-6 2.500-6 0M19 17.500h3v-3M18 19.500h-3v3" fill="none" stroke="#fff" stroke-width="1.300"/></svg></button>
  <button class="tool" disabled aria-label="Trim extend"><svg viewBox="0 0 24 24"><path d="M10.500 0v11" stroke="#7b8a88" stroke-width="2"/><path d="M.5 11.500h23" stroke="#b99" stroke-width="1.500"/><path d="M10.500 12v8M16.500 12v11" stroke="#a99" stroke-width="1.400"/><rect x="16" y="1" width="7" height="7" rx="1" fill="#b5b39a"/><path d="M19.500 2v5M17 3.500l5 2M22 3.500l-5 2" stroke="#fff"/><rect x="1" y="17" width="7" height="7" rx="1" fill="#c9a5a5"/><path d="M2.800 18.800l3.500 3.500M6.300 18.800l-3.500 3.500" stroke="#fff"/><rect x="9" y="10" width="3" height="3" fill="#fff" stroke="#666"/><rect x="15" y="10" width="3" height="3" fill="#fff" stroke="#666"/></svg></button>
  <button class="tool" disabled aria-label="Split parts"><svg viewBox="0 0 24 24"><use href="#cut"/></svg></button>
  <button class="tool" disabled aria-label="Cut parts"><svg viewBox="0 0 24 24"><use href="#cut"/></svg></button>
  <button class="tool" disabled aria-label="Merge features"><svg viewBox="0 0 24 24"><path d="M1.500 6C1 1.500 7 0 10.500 3v7C6 14 2 11.500 1.500 6zM13.500 3C17 0 22 1.500 22.500 6S18 14 13.500 10z" fill="#b9c0ba" stroke="#888" stroke-width=".8"/><path d="M9 4h6M9 7h6M9 10h6M6 13c0 5 3 4 7 8" fill="none" stroke="#555" stroke-width="1.200"/></svg></button>
  <button class="tool" disabled aria-label="Merge attributes"><svg viewBox="0 0 24 24"><path d="M2 2h19M2 7h6M15 7h6M2 9.500h19M2 14.500h6M15 14.500h6M2 17h19M2 22h6M15 22h6M7 6c2-4 7-4 9 0M7 13c2-4 7-4 9 0M7 20.500c2-4 7-4 9 0" fill="none" stroke="#666" stroke-width="1.200"/></svg></button>
  <button class="tool" disabled aria-label="Rotate symbols"><svg viewBox="0 0 24 24"><path d="M12 2l8 6-8 5z" fill="#bbb" stroke="#777"/><path d="M12 13l5 9.500H7z" fill="#eee" stroke="#aaa"/><path d="M5 18C0 12 3 5 9 4M6 2l3.500 2L7 7" fill="none" stroke="#666" stroke-width="1.200"/></svg></button><button class="drop" disabled aria-label="Symbol options"></button>
  <i class="grip next"></i>
  <button class="tool" disabled aria-label="Circular string"><svg viewBox="0 0 24 24"><path d="M3 20C2 8 8 3 18 3.500" fill="none" stroke="#999" stroke-width="1.700"/><g fill="#ddd" stroke="#777"><rect x="1.500" y="19" width="3.500" height="3.500"/><rect x="7.500" y="8" width="3.500" height="3.500"/><rect x="16.500" y="2" width="3.500" height="3.500"/></g><use href="#b-new"/></svg></button>
  <button class="tool" disabled aria-label="Add circle"><svg viewBox="0 0 24 24"><path d="M3 3l3 16 5 2M3 3l11-1 5 6-2 6" fill="none" stroke="#999" stroke-width="1.500"/><circle cx="11" cy="11" r="6.500" fill="#ddd" stroke="#999"/><rect x="1" y="1" width="3.500" height="3.500" fill="#ddd" stroke="#777"/><use href="#b-new"/></svg></button><button class="drop" disabled aria-label="Circle options"></button>
  <button class="tool" disabled aria-label="Add ellipse"><svg viewBox="0 0 24 24"><ellipse cx="10" cy="11" rx="9" ry="6" transform="rotate(-40 10 11)" fill="#eee" stroke="#888" stroke-width="1.500"/><g fill="#ddd" stroke="#777"><rect x="1" y="14" width="3" height="3"/><rect x="8" y="6" width="3" height="3"/><rect x="9" y="10.500" width="3" height="3"/></g><use href="#b-new"/></svg></button><button class="drop" disabled aria-label="Ellipse options"></button>
  <button class="tool" disabled aria-label="Add rectangle"><svg viewBox="0 0 24 24"><path d="M3 4.500h16v14H3z" fill="#eee" stroke="#999" stroke-width="1.700"/><g fill="#ddd" stroke="#777"><rect x="1.500" y="3" width="3.500" height="3.500"/><rect x="16.500" y="3" width="3.500" height="3.500"/><rect x="1.500" y="15" width="3.500" height="3.500"/></g><use href="#b-new"/></svg></button><button class="drop" disabled aria-label="Rectangle options"></button>
  <button class="tool" disabled aria-label="Add regular polygon"><svg viewBox="0 0 24 24"><path d="M9 2l10 4v10l-9 5L3 11z" fill="#eee" stroke="#999" stroke-width="1.700"/><g fill="#ddd" stroke="#777"><rect x="1.500" y="9.500" width="3.500" height="3.500"/><rect x="10" y="9.500" width="3.500" height="3.500"/></g><use href="#b-new"/></svg></button><button class="drop" disabled aria-label="Polygon options"></button>
  <i class="grip next"></i>
  <button class="tool" aria-label="Python console"><svg viewBox="0 0 24 24"><path d="M11.500 2c-4 0-5 1-5 3v2.500h6v1H4.500C2 8.500 1 11 1 13s1 4.500 3 4.500h2V14c0-2 1.500-3 3-3h5c1.500 0 2.500-1 2.500-2.500V5c0-2-2-3-5-3z" fill="#3874a7"/><path d="M11.500 22c4 0 5-1 5-3v-2.500h-6v-1h8c2 0 2.500-2.500 2.500-4.500s-1-4-3-4h-1.500v2c0 2-1.500 3-3 3h-5C7 12 6.500 13.500 6.500 15v4c0 2 2 3 5 3z" fill="#fdd23e"/><circle cx="9" cy="4.800" r="1" fill="#fff"/><circle cx="14" cy="19.200" r="1" fill="#fff"/><path d="M16.500 17l5.500 2.700-5.500 2.700" fill="none" stroke="#333" stroke-width="1.300"/></svg></button>
  <button class="tool" aria-label="Profile plot"><svg viewBox="0 0 24 24"><path d="M3 3h18v18H3z" fill="#f7f7f7"/><path d="M2.500 23V2M1 21.500h20" stroke="#777" stroke-width="1.300"/><path d="M2.500 0L4.500 3.500H.5zM23 21.500l-3-2v4z" fill="#777"/><path d="M5 15.500l7-3.500L16.500 5l5-2" fill="none" stroke="#a1128e" stroke-width="1.600"/><path d="M5 19l6-2 5-4 5 1.500" fill="none" stroke="#2a8a9c" stroke-width="1.500"/></svg></button><button class="drop" aria-label="Plot options"></button>
  <button class="tool" disabled aria-label="Stream digitizing"><svg viewBox="0 0 24 24"><path d="M2 2c1 5-2 10 2 13s7-1 6-5 2-7 5-7h8" fill="none" stroke="#999" stroke-width="1.100"/><g fill="#fff" stroke="#777"><circle cx="2" cy="2" r="1.500"/><circle cx="8" cy="14.500" r="1.500"/><circle cx="16" cy="3" r="1.500"/><circle cx="22" cy="3" r="1.500"/></g><use href="#b-new"/></svg></button>
</div>

<div class="toolbar snap">
  <i class="grip"></i>
  <button class="tool" aria-label="Enable snapping"><svg viewBox="0 0 24 24"><g fill="none"><path d="M12 3.500l6 5.500C25 16 15 26 8.500 18.500L3.500 12.500" stroke="#7d0000" stroke-width="6"/><path d="M13 4.500l5 4.500C25 16 15 26 8.500 18.500L4.300 13.500" stroke="#d00a0a" stroke-width="4.400"/><path d="M12.700 4.200l2.500 2.200M4.100 13.300l2.200 2.600" stroke="#fff" stroke-width="4.200"/></g></svg></button>
  <button class="tool mini" disabled aria-label="Snap layers"><svg viewBox="0 0 24 24"><path d="M5 2l5 17L16 4h6M5 8l5 6 6-3h6" fill="none" stroke="#a5a5a5" stroke-width="1.600"/><g fill="#ddd" stroke="#777"><rect x="3.500" y="1" width="3" height="3"/><rect x="3.500" y="7" width="3" height="3"/><rect x="8.500" y="11" width="3" height="3"/><rect x="8.500" y="17.500" width="3" height="3"/><rect x="13.500" y="3" width="3" height="3"/><rect x="19.500" y="3" width="3" height="3"/><rect x="13.500" y="9" width="3" height="3"/><rect x="19.500" y="9" width="3" height="3"/></g></svg></button>
  <button class="tool mini pressed" disabled aria-label="Snap to vertex"><svg viewBox="0 0 24 24"><g fill="#ccc" stroke="#666"><rect x="4.500" y="5" width="3.500" height="3.500"/><rect x="16.500" y="7" width="3.500" height="3.500"/><rect x="10.500" y="17" width="3.500" height="3.500"/></g></svg></button>
  <span class="spin tol"><input type="text" value="5" disabled aria-label="Snapping tolerance"><span class="steps"><button disabled aria-label="Increase tolerance"></button><button disabled aria-label="Decrease tolerance"></button></span></span>
  <span class="combo unit"><select disabled aria-label="Tolerance units"><option>px</option></select></span>
  <button class="tool" aria-label="Topological editing"><svg viewBox="0 0 24 24"><path d="M8.500 10.800L3.200 2M8.500 10.800l13.300-4.500M8.500 10.800v11.700" stroke="#82bb88" stroke-width="2" stroke-linecap="round"/><rect x="6.500" y="8.800" width="4" height="4" fill="#aaa" stroke="#555"/></svg></button>
  <button class="tool mini" aria-label="Overlap mode"><svg viewBox="0 0 24 24"><path d="M1.500 6C1 1 7 .5 11 2.500s11-2.500 11.500 2-1 8-5 7.500S10 9 7 10s-5 0-5.500-4z" fill="#b9b9b9" stroke="#444" stroke-width="1.100"/><path d="M1.500 8c0-5 6-6.500 10-3.500S13 11 15 14s4 6 .5 8-8 0-8-4S1.500 13 1.500 8z" fill="#86c087" stroke="#333" stroke-width="1.100"/><path d="M2 8.500C2 4 7.500 2.500 11 5.500c1.500 2 1 4 2 5.500-3 0-5 1.500-8 2-2-1.500-3-3-3-4.500z" fill="#9dd48a"/><path d="M5 12.500c3-1 6-2.500 10-2" fill="none" stroke="#333" stroke-dasharray="2 1.500"/></svg></button>
  <button class="tool" disabled aria-label="Snap on intersection"><svg viewBox="0 0 24 24"><path d="M1.500 2L22 22.500M22 2L1.500 22.500" stroke="#a5a5a5" stroke-width="2"/><circle cx="12" cy="12.300" r="2.400" fill="#ddd" stroke="#888"/></svg></button>
  <button class="tool" disabled aria-label="Enable tracing"><svg viewBox="0 0 24 24"><path d="M22.500 2L1.600 22.500" stroke="#a5a5a5" stroke-width="2"/><path d="M4.200 3.200L10 9.200l7-.4 3 11.700-6.700-6.300-7 1.100z" fill="#bdb9a2"/></svg></button><button class="drop" disabled aria-label="Tracing options"></button>
  <button class="tool" disabled aria-label="Self snapping"><svg viewBox="0 0 24 24"><path d="M1.500 22.500l7-3.500L4.500 7 20 15.500" fill="none" stroke="#a5a5a5" stroke-width="1.800"/><path d="M11 2.500l4-1.500 5.500 10.500v4l-4-2z" fill="#dcd8c0" stroke="#887"/><circle cx="8.500" cy="18.700" r="2.200" fill="#ddd" stroke="#888"/><circle cx="4.500" cy="6.800" r="2.200" fill="#ddd" stroke="#888"/></svg></button>
</div>

<main class="work">
  <section class="dock">
    <header class="dock-head"><h2>Layers</h2><button aria-label="Float layers panel"><svg viewBox="0 0 22 22"><use href="#float"/></svg></button><button aria-label="Close layers panel"><svg viewBox="0 0 22 22"><use href="#shut"/></svg></button></header>
    <div class="dock-tools">
      <button class="stool" aria-label="Layer styling"><svg viewBox="0 0 24 24"><path d="M2 11l7-8 8 7-8 8z" fill="#8db6e4"/><path d="M6 7l5-5 5 5-5 5z" fill="#fbd938"/><path d="M1 17l4-6 6 7-4 3z" fill="#e8303a"/><path d="M11 9l7 6-5 7-9-4 4-2z" fill="#d9964a" stroke="#9c6423" stroke-width=".6"/><path d="M15 11l7-8" stroke="#b97a2c" stroke-width="2.800" stroke-linecap="round"/></svg></button>
      <button class="stool" aria-label="Add group"><svg viewBox="0 0 24 24"><path d="M7 3h13v15H7zM4 6v15h13M1 11v12h11" fill="none" stroke="#777" stroke-width="1.200"/><path d="M11 14V3a2 2 0 014 0v11" fill="none" stroke="#34597f" stroke-width="1.300"/><rect x="14" y="15" width="9" height="9" rx="1.500" fill="#4f9457"/><path d="M18.500 16.500v6M15.500 19.500h6" stroke="#fff" stroke-width="1.600"/></svg></button>
      <button class="stool mini" aria-label="Manage map themes"><svg viewBox="0 0 24 24"><path d="M1 12c5-8 16-8 22 0-6 8-17 8-22 0z" fill="#fff" stroke="#888" stroke-width="1.200"/><circle cx="12" cy="11.500" r="5.500" fill="#6f97cb" stroke="#34597f"/><circle cx="12" cy="11" r="2.300" fill="#122"/><path d="M2 6c5-5 14-5 20-1" fill="none" stroke="#aaa" stroke-width="1.300"/></svg></button>
      <button class="stool mini" aria-label="Filter legend"><svg viewBox="0 0 24 24"><path d="M3 5h18l-7 9v10l-4-2v-8z" fill="#5f8fc4" stroke="#31506f"/><path d="M2 1h20v4H2z" fill="#fce94f" stroke="#555" stroke-width=".8"/></svg></button>
      <button class="stool" aria-label="Filter by expression"><svg viewBox="0 0 24 24"><path d="M11.500 4C10 1 4 1 4.500 4.500S7 8 9 8C5 8 1.500 9 2 12s8 3.500 10 .5" fill="none" stroke="#5c3566" stroke-width="2"/><path d="M12.500 12.500h11v11h-2.500V15l-2 3v5.500h-2V18l-2-3v8.500h-2.500z" fill="#999"/></svg></button><button class="drop" aria-label="Expression filter options"></button>
      <button class="stool" aria-label="Expand all"><svg viewBox="0 0 24 24"><path d="M1 3h21M4 3v18h4M4 11h4" fill="none" stroke="#888" stroke-width="1.300"/><path d="M8 8.500h3.500V12H8zM8 18h3.500v3.500H8z" fill="#fff" stroke="#f39a1f" stroke-width="1.500"/><path d="M14 2h5v12h4l-6.500 7.500L10 14h4z" fill="#5f8fc4" stroke="#31506f"/></svg></button>
      <button class="stool" aria-label="Collapse all"><svg viewBox="0 0 24 24"><path d="M1 3h21M4 3v18h4M4 11h4" fill="none" stroke="#888" stroke-width="1.300"/><path d="M8 8.500h3.500V12H8zM8 18h3.500v3.500H8z" fill="#fff" stroke="#f39a1f" stroke-width="1.500"/><path d="M14 21h5V9h4l-6.500-8L10 9h4z" fill="#5f8fc4" stroke="#31506f"/></svg></button>
      <button class="stool" aria-label="Remove layer"><svg viewBox="0 0 24 24"><path d="M2 2h17v17H2z" fill="#f3f3f3" stroke="#888" stroke-width="1.300"/><rect x="14" y="16" width="9" height="7" rx="1.500" fill="#e2434b"/><path d="M16 19.500h5" stroke="#fff" stroke-width="1.800"/></svg></button>
    </div>
    <div class="frame">
      <ul class="layers">
        <li class="on"><input type="checkbox" id="l1" checked><i class="line red"></i><label for="l1"><u>RD_EjeValleSuavizado_Autodesk</u></label><span class="nocrs"><svg viewBox="0 0 24 24"><g fill="none" stroke="#bbb"><circle cx="12" cy="12" r="9.500"/><path d="M2 12h20M12 2c-6 5-6 15 0 20M12 2c6 5 6 15 0 20"/></g><path d="M7 8c0-6 10-6 10 0 0 4-5 4-5 8" fill="none" stroke="#666" stroke-width="3"/><path d="M12 18.500v3" stroke="#666" stroke-width="3"/></svg></span></li>
        <li><input type="checkbox" id="l2" checked><i class="line blue"></i><label for="l2">CGG_DrenajeNatural_v0</label></li>
      </ul>
      <div class="hbar"><button class="left" aria-label="Scroll layers left"></button><span class="track"><span class="thumb t74"></span></span><button class="right" aria-label="Scroll layers right"></button></div>
    </div>
  </section>

  <section class="map" aria-label="Map canvas">
    <i class="handle"></i>
    <svg class="canvas">
      <g transform="translate(-514 -396)" fill="none">
        <path d="M511 648L514 644 525 633 550 627 581 622 593 617 606 609 619 598 624 595 636 595 652 597 674 603 699 611 728 623 759 628 771 629 787 631 801 634 813 642 816 651 814 664 809 674 799 684 789 690 785 698 784 711 786 723 791 735 794 753 797 761 802 764 816 767 847 768 861 764 874 753 883 742 889 726 890 719 886 699 889 675 896 659 902 653 910 633 916 629 926 626 935 627 945 634 956 646 966 657 973 671 978 685 980 698 986 713 1001 729 1014 739 1031 750 1046 755 1066 767 1084 774 1128 778 1140 782 1155 783 1175 786 1189 791 1202 793 1214 791 1226 784 1243 783 1255 785 1269 799 1276 814 1274 826 1268 835 1268 844 1275 851 1296 862 1313 869 1327 871 1342 871 1363 860 1374 851 1385 844 1397 834 1406 825 1415 818 1424 804" stroke="#2427cf" stroke-width="3.500"/>
        <path d="M505 1303L705 1421 770 1453" stroke="#c8002f" stroke-width="6.500"/>
        <path d="M841 694L833 766 853 834" stroke="#e4a550" stroke-opacity=".4" stroke-width="6"/>
        <g fill="#e59b3c" fill-opacity=".62" stroke="#d18b31" stroke-opacity=".6" stroke-width="2"><circle cx="841" cy="698" r="10"/><circle cx="833" cy="766" r="10"/></g>
      </g>
    </svg>
  </section>

  <section class="dock browser">
    <header class="dock-head"><h2></h2><button aria-label="Float browser panel"><svg viewBox="0 0 22 22"><use href="#float"/></svg></button><button aria-label="Close browser panel"><svg viewBox="0 0 22 22"><use href="#shut"/></svg></button></header>
    <div class="dock-tools"></div>
    <div class="frame">
      <div class="scroll">
        <ul class="files">
          <li class="n">Natural.shp</li><li class="n">Natural.zip</li><li>leModelShapefile.zip</li><li class="n">tlinesAll.shp</li><li class="n">tlinesAll.zip</li><li class="n">tlinesAnthropic.shp</li><li class="n">tlinesAnthropic.zip</li><li class="n">tlinesNatural.shp</li><li class="n">tlinesNatural.xml</li><li class="n">tlinesNatural.zip</li><li class="n">tlinesNatural3116.shp</li><li>p</li><li class="n">p</li><li class="on">ado_AutodeskCivil3DCloud.shp</li><li>ado_AutodeskCivil3DCloud.zip</li><li>ado_QGIS.shp</li><li>ado_QGIS.zip</li><li class="m">mplazar.shp</li><li class="m">mplazarProyecto.shp</li><li class="m">mplazarProyecto.zip</li><li class="m">mplazarVertices.shp</li><li></li>
          <li class="dir"><i></i><svg viewBox="0 0 28 28"><path d="M2 26V2h10l3 4h11v20z"/></svg>table</li>
          <li class="dir"><i></i><svg viewBox="0 0 28 28"><path d="M2 26V2h10l3 4h11v20z"/></svg>temp</li>
          <li class="dir"><i></i><svg viewBox="0 0 28 28"><path d="M2 26V2h10l3 4h11v20z"/></svg></li>
        </ul>
        <div class="vbar"><button class="up" aria-label="Scroll up"></button><span class="track"><span class="thumb"></span></span><button class="down" aria-label="Scroll down"></button></div>
      </div>
      <div class="hbar corner"><button class="left" aria-label="Scroll browser left"></button><span class="track"><span class="thumb t77"></span></span><button class="right" aria-label="Scroll browser right"></button></div>
    </div>
    <div class="tabs"><button class="sel">Browser</button><button>Processing Toolbox</button></div>
  </section>
</main>

<footer class="status">
  <label class="locate"><svg viewBox="0 0 24 24"><circle cx="10" cy="9" r="7.500"/><path d="M15 15l7 8"/></svg><input type="text" placeholder="Type to locate (Ctrl+K)" aria-label="Locator"></label>
  <div class="grp"><label for="co">Coordinate</label><input class="box coord" id="co" type="text" value="1077554, 1573662"><button class="flat" aria-label="Toggle extents"><svg viewBox="0 0 24 24"><circle cx="17" cy="16" r="7" fill="#c3b3b3"/><path d="M3 5c-2 5 1 10 6 13l7-7C17 5 8-2 3 5z" fill="#fff" stroke="#000" stroke-width="2.400"/><path d="M8 3l4 10" stroke="#000" stroke-width="3"/><circle cx="14" cy="17.500" r="5.500" fill="#fff" stroke="#000" stroke-width="2.200"/><circle cx="14" cy="17.500" r="1.800" fill="none" stroke="#000" stroke-width="1.300"/><path d="M15 5l3-1M20 3l3-2M2 14l1 3" stroke="#000" stroke-width="1.600"/></svg></button></div>
  <div class="grp"><label for="sc">Scale</label><span class="box scale"><input id="sc" type="text" value="1:9629"><button aria-label="Scale list"></button></span></div>
  <div class="grp"><svg class="lock" viewBox="0 0 24 34"><path d="M6 16V8a6 6 0 0112 0v8" fill="none" stroke="#8a8a8a" stroke-width="3"/><rect x="0" y="14" width="24" height="19" rx="2" fill="#666"/></svg></div>
  <div class="grp tight"><label for="mg">Magnifier</label><span class="spin"><input id="mg" type="text" value="100%"><span class="steps"><button aria-label="Magnify more"></button><button aria-label="Magnify less"></button></span></span></div>
  <div class="grp rot"><label for="ro">Rotation</label><span class="spin"><input id="ro" type="text" value="0.0 °"><span class="steps"><button aria-label="Rotate more"></button><button aria-label="Rotate less"></button></span></span></div>
  <div class="grp render"><input type="checkbox" id="rn" checked><label for="rn">Render</label></div>
  <div class="grp crs"><a href="#"><svg viewBox="0 0 24 24"><g fill="none" stroke="#777" stroke-width="1.300"><path d="M2 9a10 8 0 0120 0M2 11c0 3 3 7 6 10h8c3-3 6-7 6-10M12 1v22M12 1C6 5 6 16 9 22M12 1c6 4 6 15 3 21M5 4h14"/></g><path d="M0 9h24v4H0z" fill="#777"/></svg>Unknown CRS</a></div>
  <button class="flat msg" aria-label="Messages"><svg viewBox="0 0 24 24"><path d="M12 1c7 0 11.500 4 11.500 9.500 0 4-2 6.500-5 8L20 23c-3 0-5-1.500-6.500-3.500C6 20 .5 16 .5 10.500S5 1 12 1z" fill="#666"/></svg></button>
</footer>

<div class="dialog" role="dialog" aria-labelledby="dt">
  <header><h2 id="dt">Measure</h2><button aria-label="Close dialog">x</button></header>
  <div class="dbody">
    <div class="tframe">
      <table>
        <thead><tr><th>x</th><th>y</th><th class="num">Segments [meters]</th></tr></thead>
        <tbody><tr><td>1077539.088</td><td>1573832.402</td><td></td></tr><tr><td>1077528.897</td><td>1573745.783</td><td class="num">87.209776</td></tr><tr><td>1077554.374</td><td>1573661.712</td><td class="num">87.839992</td></tr></tbody>
      </table>
    </div>
    <div class="drow"><label for="tt">Total</label><input class="total" id="tt" type="text" value="175.049767 m" readonly><span class="combo"><select aria-label="Units"><option>meters</option></select></span></div>
    <div class="drow radios"><label><input type="radio" name="mode">Cartesian</label><label><input type="radio" name="mode" checked>Ellipsoidal</label></div>
    <button class="info"><svg viewBox="0 0 20 18"><path d="M1 2h18L10 16z" fill="#444" stroke="#222" stroke-width="2"/></svg>Info</button>
    <div class="note"><p>The calculations are based on:</p><p>* Project ellipsoidal calculation is selected.</p><p>* The coordinates are transformed to the chosen ellipsoid (PARAMETER: 6378137:6356752.31414035614579916), and the distance is calculated in meters.</p></div>
    <div class="acts"><button class="def"><u>N</u>ew</button><button><u>C</u>onfiguration</button><button>Copy</button><button>Close</button><button>Help</button></div>
  </div>
</div>
</body>
</html>
```
FILE: styles.css
```css
* { box-sizing: border-box; }
body {
  margin: 0;
  height: 100vh;
  display: flex;
  flex-direction: column;
  background: #efefef;
  color: #000;
  font: 21px/28px "DejaVu Sans Condensed", "Noto Sans", sans-serif;
  position: relative;
  overflow: hidden;
}
h1, h2, p, ul { margin: 0; padding: 0; font-weight: 400; font-size: inherit; }
ul { list-style: none; }
button, input, select { font: inherit; color: inherit; margin: 0; }
button { padding: 0; border: 0; background: none; }
a { color: inherit; text-decoration: none; }
u { text-underline-offset: 3px; text-decoration-thickness: 2px; }
.defs { position: absolute; width: 0; height: 0; }

/* title and menu */
.titlebar { flex: none; display: flex; align-items: center; height: 45px; background: #f3f3f3; }
.logo { width: 34px; height: 46px; }
.titlebar h1 { flex: 1; margin-left: 6px; font: 22px/30px "Open Sans", "Noto Sans", sans-serif; }
.winbtns { display: flex; padding-right: 3px; }
.winbtns button { width: 92px; height: 42px; display: grid; place-items: center; }
.winbtns svg { width: 22px; height: 22px; fill: none; stroke: #000; stroke-width: 2; }
.menubar { flex: none; display: flex; height: 38px; padding-left: 5px; border-bottom: 2px solid #d2d2d2; }
.menubar a { padding: 5px 15px 0; }

/* toolbars */
.toolbar {
  flex: none;
  display: flex;
  align-items: center;
  height: 78px;
  background: linear-gradient(#fafafa, #efefef);
  border-bottom: 2px solid #b2b2b2;
}
.snap { height: 77px; }
.grip {
  width: 12px;
  height: 36px;
  margin: 0 5px 0 8px;
  background: radial-gradient(circle, #b0b0b0 1px, transparent 2px) 0 0 / 6px 6px;
}
.next { margin-left: 16px; }
.end { margin-right: 13px; }
.sep { width: 2px; height: 38px; margin: 0 6px; background: #d0d0d0; }
.fill { flex: 1; }
.tool {
  position: relative;
  width: 63px;
  height: 62px;
  margin: 0 2px 0 1px;
  border: 2px solid transparent;
  border-radius: 5px;
  display: grid;
  place-items: center;
}
.tool svg { width: 48px; height: 48px; overflow: visible; }
.tool:disabled svg { filter: grayscale(.7); opacity: .38; }
.tool.pressed, .drop.pressed { background: #dcdcdc; border: 2px solid #adadad; border-radius: 5px; }
.drop { width: 24px; height: 62px; display: grid; place-items: center; }
.drop::after, .mini::after, .combo::after, .scale button::after {
  content: "";
  border: 8px solid transparent;
  border-top: 9px solid #4a4a4a;
  border-bottom: 0;
}
.drop:disabled::after, .mini:disabled::after { border-top-color: #a0a0a0; }
.mini::after { position: absolute; right: 3px; bottom: 4px; border-width: 6px 6px 0; }

/* fields */
.spin, .box, .combo, .locate {
  height: 44px;
  border: 2px solid #b0b0b0;
  border-top-color: #a2a2a2;
  border-radius: 5px;
  background: #fff;
}
.spin { display: flex; width: 167px; }
.spin input, .scale input, .locate input { flex: 1; min-width: 0; border: 0; background: none; padding: 0 8px; }
.steps { width: 29px; border-left: 2px solid #c4c4c4; background: linear-gradient(#fff, #f2f2f2); display: grid; align-content: center; justify-items: center; gap: 6px; }
.steps button { border: 7px solid transparent; border-top: 0; border-bottom: 8px solid #555; }
.steps button + button { border-top: 8px solid #555; border-bottom: 0; }
.combo { position: relative; display: block; background: linear-gradient(#fff, #f0f0f0); }
.combo select { appearance: none; width: 100%; height: 100%; border: 0; background: none; padding: 0 8px; opacity: 1; }
.combo::after { position: absolute; right: 14px; top: 15px; pointer-events: none; }
.snap .spin, .snap .combo { height: 40px; color: #7c7c7c; }
.snap .tol { background: #efefef; margin-right: 3px; }
.snap .combo { width: 177px; height: 44px; margin-right: 3px; }
.snap .combo::after { border-top-color: #909090; }
.snap .steps button { border-bottom-color: #909090; }
.snap .steps button + button { border-top-color: #909090; }
input[type="checkbox"], input[type="radio"] { appearance: none; width: 28px; height: 28px; border: 2px solid #b4b4b4; background: #fff; display: grid; place-items: center; }
input[type="checkbox"]:checked::after {
  content: "";
  width: 9px;
  height: 16px;
  border: solid #000;
  border-width: 0 3px 3px 0;
  transform: rotate(35deg);
}
input[type="radio"] { border-radius: 50%; border-color: #9c9c9c; }
input[type="radio"]:checked::after { content: ""; width: 14px; height: 14px; border-radius: 50%; background: #444; }

/* work area */
.work { flex: 1; display: grid; grid-template-columns: 499px 1fr 677px; grid-template-rows: minmax(0, 1fr); gap: 14px; padding-top: 1px; min-height: 0; }
.dock { display: flex; flex-direction: column; min-width: 0; min-height: 0; }
.dock-head { flex: none; display: flex; gap: 6px; align-items: center; height: 40px; padding: 0 3px 0 8px; }
.dock-head h2 { flex: 1; }
.dock-head button, .dock-head svg { width: 22px; height: 22px; display: block; }
.dock-tools { flex: none; display: flex; height: 60px; align-items: center; padding: 0 0 4px 7px; }
.stool { position: relative; width: 50px; height: 50px; display: grid; place-items: center; }
.stool svg { width: 32px; height: 32px; }
.dock-tools .drop { width: 23px; }
.stool.mini::after { right: 2px; bottom: 8px; }
.frame { flex: 1; min-height: 0; border: 2px solid #b9b9b9; border-width: 2px 1px; background: #fff; display: flex; flex-direction: column; }
.layers { flex: 1; }
.layers li { position: relative; display: flex; align-items: center; height: 36px; padding-left: 47px; font-weight: 700; font-size: 23px; overflow: hidden; white-space: nowrap; }
.on { background: #efefef; }
.line { flex: none; width: 32px; height: 2px; margin: 0 12px; background: #3b37a8; }
.line.red { height: 4px; background: #c8103a; }
.layers input { flex: none; }
.nocrs { position: absolute; right: 9px; top: 3px; width: 33px; height: 32px; border: 1px solid #c4c4c4; border-radius: 3px; background: #f4f4f4; display: grid; place-items: center; }
.nocrs svg { width: 26px; height: 26px; }
.hbar { flex: none; display: flex; height: 28px; border-top: 2px solid #bdbdbd; background: #e4e4e4; }
.hbar button, .vbar button { width: 27px; height: 26px; background: #fafafa; display: grid; place-items: center; }
.hbar button { border: solid #b4b4b4; border-width: 0 2px 0 0; }
.hbar .right { border-width: 0 0 0 2px; }
.hbar button::after, .vbar button::after { content: ""; border: 7px solid transparent; }
.hbar .left::after { border-left: 0; border-right: 8px solid #444; }
.hbar .right::after { border-right: 0; border-left: 8px solid #444; }
.track { flex: 1; display: block; }
.thumb { display: block; background: linear-gradient(#fff, #f1f1f1); border: solid #b8b8b8; }
.hbar .thumb { height: 100%; border-width: 0 2px 0 0; }
.t74 { width: 74%; }
.t77 { width: 78%; }
.corner { padding-right: 28px; }
.map { position: relative; min-width: 0; border: 1px solid #b4b4b4; border-bottom-width: 2px; background: #fff; }
.canvas { display: block; position: absolute; inset: 0; width: 100%; height: 100%; }
.handle { position: absolute; left: -11px; top: 512px; width: 6px; height: 36px; background: radial-gradient(circle, #b0b0b0 1px, transparent 2px) 0 0 / 6px 6px; }

/* browser tree */
.scroll { flex: 1; display: flex; min-height: 0; }
.files { flex: 1; min-width: 0; overflow: hidden; }
.files li { height: 36px; line-height: 36px; padding-left: 422px; white-space: nowrap; overflow: hidden; }
.files .n { padding-left: 417px; }
.files .m { padding-left: 415px; }
.files .dir { padding-left: 143px; display: flex; align-items: center; }
.dir i { border: 7px solid transparent; border-left: 8px solid #555; border-right: 0; margin-right: 16px; }
.dir svg { width: 28px; height: 28px; margin-right: 14px; fill: #ececec; stroke: #777; stroke-width: 2; }
.vbar { width: 28px; border-left: 2px solid #bdbdbd; background: #e4e4e4; display: flex; flex-direction: column; }
.vbar .up { border-bottom: 2px solid #b4b4b4; }
.vbar .down { border-top: 2px solid #b4b4b4; }
.vbar .up::after { border-top: 0; border-bottom: 9px solid #444; }
.vbar .down::after { border-bottom: 0; border-top: 9px solid #444; }
.vbar .track { display: grid; grid-template-rows: 444fr 156fr 218fr; }
.vbar .thumb { grid-row: 2; border-width: 2px 0; }
.tabs { flex: none; display: flex; align-items: flex-start; height: 48px; border-top: 2px solid #b9b9b9; margin-top: 2px; }
.tabs button { height: 42px; padding: 0 24px; border: 2px solid #b4b4b4; border-top: 0; border-radius: 0 0 5px 5px; background: #dcdcdc; }
.tabs .sel { height: 46px; background: #f2f2f2; border-right-width: 1px; }

/* status bar */
.status { flex: none; display: flex; align-items: center; height: 56px; padding: 2px 14px 0 8px; }
.locate { display: flex; align-items: center; width: 399px; margin-right: auto; }
.locate svg { width: 26px; height: 26px; margin-left: 15px; fill: none; stroke: #8c8c8c; stroke-width: 2; }
.locate input { padding: 0 14px; }
.locate input::placeholder { color: #7c7c7c; opacity: 1; }
.grp { display: flex; align-items: center; gap: 8px; margin-right: 24px; }
.coord { width: 212px; padding: 0 12px; }
.flat svg { width: 34px; height: 34px; display: block; }
.scale { display: flex; width: 161px; }
.scale button { width: 39px; border-left: 1px solid #c4c4c4; display: grid; place-items: center; background: linear-gradient(#fff, #f0f0f0); }
.lock { width: 25px; height: 34px; }
.grp:has(.lock) { margin-right: 18px; }
.tight { margin-right: 20px; }
.rot { margin-right: 14px; gap: 18px; }
.render { margin-right: 32px; gap: 11px; }
.crs { margin-right: 48px; }
.crs a { display: flex; align-items: center; gap: 4px; }
.crs svg { width: 32px; height: 32px; }

/* measure dialog */
.dialog { position: absolute; left: 1421px; top: 336px; width: 887px; border: 2px solid #c2c2c2; border-radius: 8px; background: #efefef; }
.dialog header { display: flex; align-items: center; justify-content: space-between; height: 56px; padding-left: 12px; background: #f3f3f3; border-radius: 8px 8px 0 0; color: #8a8a8a; }
.dialog h2 { font: 22px/30px "Open Sans", "Noto Sans", sans-serif; }
.dialog header button { width: 40px; height: 40px; margin-top: 8px; background: #dadada; color: #f6f6f6; }
.dbody { padding: 18px 18px 17px 17px; }
.tframe { height: 456px; background: #fff; border: 2px solid #b9b9b9; border-width: 2px 1px; }
table { width: 100%; border-collapse: collapse; table-layout: fixed; }
th { width: 200px; height: 34px; padding: 6px 5px 0; text-align: left; font-weight: 400; line-height: 26px; background: linear-gradient(#fff, #efefef); border-bottom: 3px solid #b4b4b4; border-right: 2px solid #c4c4c4; }
th:last-child { width: auto; border-right: 0; }
td { padding: 0 7px; height: 28px; line-height: 28px; }
.num { text-align: right; }
.drow { display: grid; grid-template-columns: 248px 324px 1fr; align-items: center; margin-top: 16px; }
.drow .total { width: 324px; height: 44px; padding: 0 8px; border: 2px solid #a8a8a8; border-radius: 5px; background: #fff; text-align: right; font-size: 22px; font-weight: 700; }
.drow .combo { margin-left: 12px; }
.radios { margin-top: 19px; height: 30px; }
.radios label { display: flex; align-items: center; gap: 11px; }
.info { display: flex; align-items: center; gap: 18px; margin: 19px 0 0 6px; font-size: 22px; font-weight: 700; }
.info svg { width: 20px; height: 18px; }
.note { margin: 6px 0 0 1px; min-height: 192px; padding: 22px 80px 0 24px; border: 2px solid #d6d6d6; border-radius: 3px; background: #ececec; }
.acts { display: grid; grid-template-columns: repeat(5, 1fr); gap: 12px; margin-top: 23px; }
.acts button { height: 44px; border: 2px solid #b2b2b2; border-radius: 5px; background: linear-gradient(#fff, #f0f0f0); }
.acts .def { border-color: #9a9a9a; }
```
